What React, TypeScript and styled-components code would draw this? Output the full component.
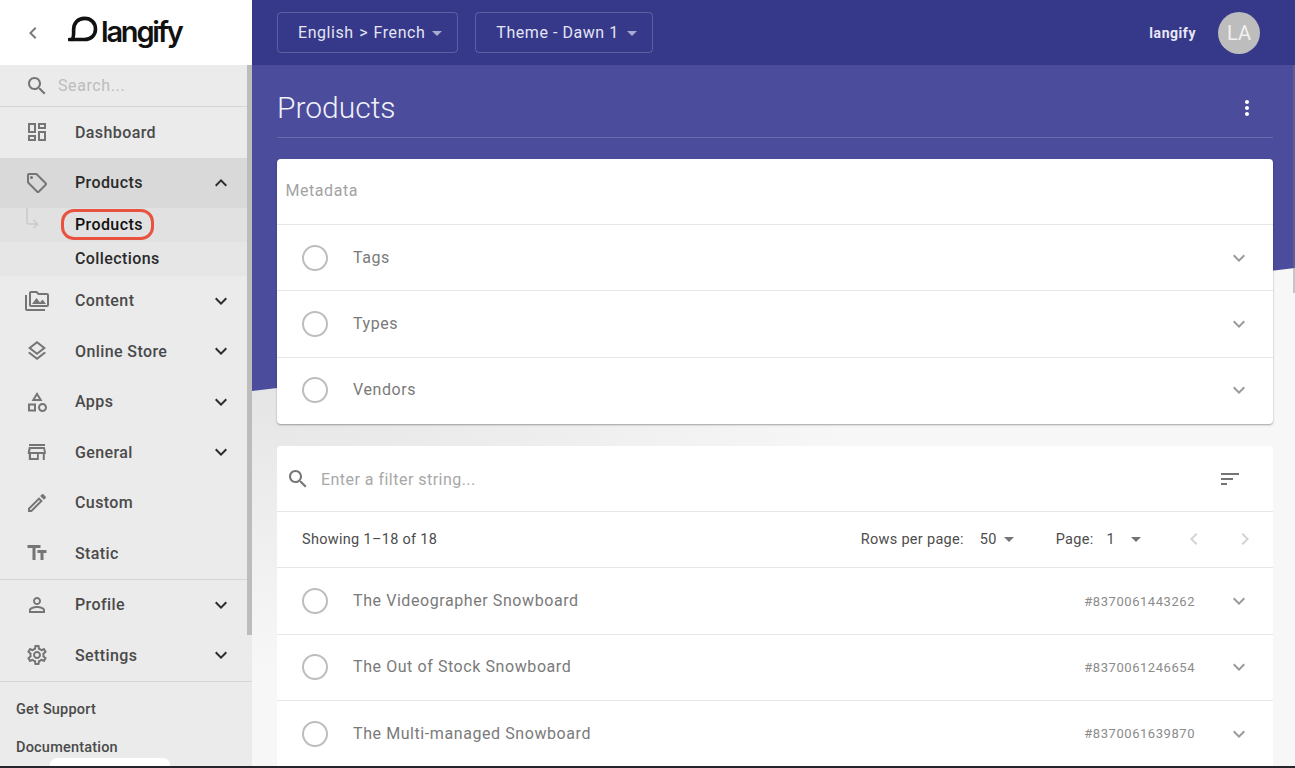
import React from "react";
import styled, { createGlobalStyle } from "styled-components";

const Global = createGlobalStyle`
  html, body { margin: 0; padding: 0; height: 100%; overflow: hidden; background: #f6f6f6; }
  * { box-sizing: border-box; }
  body { font-family: Roboto, "Liberation Sans", sans-serif; }
`;

const P = {
  dashboard: "M19 5v2h-4V5h4M9 5v6H5V5h4m10 8v6h-4v-6h4M9 17v2H5v-2h4M21 3h-8v6h8V3zM11 3H3v10h8V3zm10 8h-8v10h8V11zm-10 4H3v6h8v-6z",
  tag: "m21.41 11.58-9-9C12.05 2.22 11.55 2 11 2H4c-1.1 0-2 .9-2 2v7c0 .55.22 1.05.59 1.42l9 9c.36.36.86.58 1.41.58s1.05-.22 1.41-.59l7-7c.37-.36.59-.86.59-1.41s-.23-1.06-.59-1.42zM13 20.01 4 11V4h7v-.01l9 9-7 7.02zM6.5 5A1.5 1.5 0 1 0 6.5 8 1.5 1.5 0 1 0 6.5 5z",
  media: "M2 6H0v5h.01L0 20c0 1.1.9 2 2 2h18v-2H2V6zm5 9h14l-3.5-4.5-2.5 3.01L11.5 9zM22 4h-8l-2-2H6c-1.1 0-1.99.9-1.99 2L4 16c0 1.1.9 2 2 2h16c1.1 0 2-.9 2-2V6c0-1.1-.9-2-2-2zm0 12H6V4h5.17l1.41 1.41.59.59H22v10z",
  layers: "M11.99 18.54l-7.37-5.73L3 14.07l9 7 9-7-1.63-1.27zM12 16l7.36-5.73L21 9l-9-7-9 7 1.63 1.27L12 16zm0-11.47L17.74 9 12 13.47 6.26 9 12 4.53z",
  category: "m12 2-5.5 9h11L12 2zm0 3.84L13.93 9h-3.87L12 5.84zM17.5 13c-2.49 0-4.5 2.01-4.5 4.5s2.01 4.5 4.5 4.5 4.5-2.01 4.5-4.5-2.01-4.5-4.5-4.5zm0 7c-1.38 0-2.5-1.12-2.5-2.5s1.12-2.5 2.5-2.5 2.5 1.12 2.5 2.5-1.12 2.5-2.5 2.5zM3 21.5h8v-8H3v8zm2-6h4v4H5v-4z",
  store: "M18.36 9l.6 3H5.04l.6-3h12.72M20 4H4v2h16V4zm.2 3H3.8L2.8 12v2h1v6h10v-6h4v6h2v-6h1v-2l-1-5zM6 18v-4h6v4H6z",
  edit: "M3 17.25V21h3.75L17.81 9.94l-3.75-3.75L3 17.25zM5.92 19H5v-.92l9.06-9.06.92.92L5.92 19zM20.71 5.63l-2.34-2.34c-.2-.2-.45-.29-.71-.29s-.51.1-.7.29l-1.83 1.83 3.75 3.75 1.83-1.83c.39-.39.39-1.02 0-1.41z",
  text: "M2.5 4v3h5v12h3V7h5V4h-13zm19 5h-9v3h3v7h3v-7h3V9z",
  person: "M12 5.9c1.16 0 2.1.94 2.1 2.1s-.94 2.1-2.1 2.1S9.9 9.16 9.9 8s.94-2.1 2.1-2.1m0 9c2.97 0 6.1 1.46 6.1 2.1v1.1H5.9V17c0-.64 3.13-2.1 6.1-2.1M12 4C9.79 4 8 5.79 8 8s1.79 4 4 4 4-1.79 4-4-1.79-4-4-4zm0 9c-2.67 0-8 1.34-8 4v3h16v-3c0-2.66-5.33-4-8-4z",
  settings: "M19.43 12.98c.04-.32.07-.64.07-.98 0-.34-.03-.66-.07-.98l2.11-1.65c.19-.15.24-.42.12-.64l-2-3.46c-.09-.16-.26-.25-.44-.25-.06 0-.12.01-.17.03l-2.49 1c-.52-.4-1.08-.73-1.69-.98l-.38-2.65C14.46 2.18 14.25 2 14 2h-4c-.25 0-.46.18-.49.42l-.38 2.65c-.61.25-1.17.59-1.69.98l-2.49-1c-.06-.02-.12-.03-.18-.03-.17 0-.34.09-.43.25l-2 3.46c-.13.22-.07.49.12.64l2.11 1.65c-.04.32-.07.65-.07.98 0 .33.03.66.07.98l-2.11 1.65c-.19.15-.24.42-.12.64l2 3.46c.09.16.26.25.44.25.06 0 .12-.01.17-.03l2.49-1c.52.4 1.08.73 1.69.98l.38 2.65c.03.24.24.42.49.42h4c.25 0 .46-.18.49-.42l.38-2.65c.61-.25 1.17-.59 1.69-.98l2.49 1c.06.02.12.03.18.03.17 0 .34-.09.43-.25l2-3.46c.12-.22.07-.49-.12-.64l-2.11-1.65zm-1.98-1.71c.04.31.05.52.05.73 0 .21-.02.43-.05.73l-.14 1.13.89.7 1.08.84-.7 1.21-1.27-.51-1.04-.42-.9.68c-.43.32-.84.56-1.25.73l-1.06.43-.16 1.13-.2 1.35h-1.4l-.19-1.35-.16-1.13-1.06-.43c-.43-.18-.83-.41-1.23-.71l-.91-.7-1.06.43-1.27.51-.7-1.21 1.08-.84.89-.7-.14-1.13c-.03-.31-.05-.54-.05-.74s.02-.43.05-.73l.14-1.13-.89-.7-1.08-.84.7-1.21 1.27.51 1.04.42.9-.68c.43-.32.84-.56 1.25-.73l1.06-.43.16-1.13.2-1.35h1.39l.19 1.35.16 1.13 1.06.43c.43.18.83.41 1.23.71l.91.7 1.06-.43 1.27-.51.7 1.21-1.07.85-.89.7.14 1.13zM12 8c-2.21 0-4 1.79-4 4s1.79 4 4 4 4-1.79 4-4-1.79-4-4-4zm0 6c-1.1 0-2-.9-2-2s.9-2 2-2 2 .9 2 2-.9 2-2 2z",
  search: "M15.5 14h-.79l-.28-.27C15.41 12.59 16 11.11 16 9.5 16 5.91 13.09 3 9.5 3S3 5.91 3 9.5 5.91 16 9.5 16c1.61 0 3.09-.59 4.23-1.57l.27.28v.79l5 4.99L20.49 19l-4.99-5zm-6 0C7.01 14 5 11.99 5 9.5S7.01 5 9.5 5 14 7.01 14 9.5 11.99 14 9.5 14z",
  more: "M16.59 8.59 12 13.17 7.41 8.59 6 10l6 6 6-6z",
  less: "m12 8-6 6 1.41 1.41L12 10.83l4.59 4.58L18 14z",
  sort: "M3 18h6v-2H3v2zM3 6v2h18V6H3zm0 7h12v-2H3v2z",
  left: "M15.41 7.41 14 6l-6 6 6 6 1.41-1.41L10.83 12z",
  right: "M10 6 8.59 7.41 13.17 12l-4.58 4.59L10 18l6-6z",
  vert: "M12 8c1.1 0 2-.9 2-2s-.9-2-2-2-2 .9-2 2 .9 2 2 2zm0 2c-1.1 0-2 .9-2 2s.9 2 2 2 2-.9 2-2-.9-2-2-2zm0 6c-1.1 0-2 .9-2 2s.9 2 2 2 2-.9 2-2-.9-2-2-2z",
  drop: "m7 10 5 5 5-5z",
};

const Svg = styled.svg<{ $c: string }>`
  display: block;
  flex: none;
  fill: ${(p) => p.$c};
`;

const Icon = ({ d, size = 24, color = "#757575" }: { d: string; size?: number; color?: string }) => (
  <Svg $c={color} width={size} height={size} viewBox="0 0 24 24">
    <path d={d} />
  </Svg>
);

const Shell = styled.div`
  width: 1295px;
  height: 768px;
  display: flex;
  flex-direction: column;
  overflow: hidden;
  position: relative;
`;
const Frame = styled.div`
  flex: 1;
  min-height: 0;
  display: flex;
`;
const BottomEdge = styled.div`
  height: 2px;
  flex: none;
  background: #24262b;
`;
const BottomTab = styled.div`
  position: absolute;
  left: 50px;
  bottom: 2px;
  width: 120px;
  height: 8px;
  background: #fff;
  border-radius: 7px 7px 0 0;
`;

/* Sidebar */
const Sidebar = styled.aside`
  width: 252px;
  flex: none;
  display: flex;
  flex-direction: column;
  background: #ebebeb;
  position: relative;
  overflow: hidden;
`;
const ScrollThumb = styled.div`
  position: absolute;
  top: 65px;
  right: 0;
  width: 5px;
  height: 570px;
  background: #bcbcbc;
`;
const Brand = styled.div`
  height: 65px;
  flex: none;
  background: #fff;
  display: flex;
  align-items: center;
  padding-left: 21px;
`;
const Logo = styled.div`
  display: flex;
  align-items: center;
  margin-left: 23px;
  margin-top: -2px;
`;
const LogoSvg = styled.svg`
  display: block;
  flex: none;
  margin-bottom: 4px;
`;
const LogoText = styled.span`
  font-family: Inter, "Liberation Sans", sans-serif;
  font-weight: 600;
  font-size: 29px;
  letter-spacing: -2.2px;
  color: #111;
  margin-left: 1px;
  margin-top: 1px;
  line-height: 34px;
`;
const SearchBar = styled.div`
  height: 42px;
  flex: none;
  display: flex;
  align-items: center;
  gap: 9px;
  padding-left: 25px;
  border-bottom: 1px solid #d6d6d6;
  color: #bcbcbc;
  font-size: 16px;
  letter-spacing: 0.6px;
`;
const NavItem = styled.div<{ $active?: boolean }>`
  height: 50.5px;
  flex: none;
  display: flex;
  align-items: center;
  padding: 0 19px 0 25px;
  background: ${(p) => (p.$active ? "#d9d9d9" : "transparent")};
`;
const NavLabel = styled.span<{ $active?: boolean }>`
  flex: 1;
  margin-left: 26px;
  font-size: 16px;
  font-weight: 500;
  letter-spacing: 0.4px;
  color: ${(p) => (p.$active ? "#2a2a2a" : "#4a4a4a")};
`;
const SubItem = styled.div<{ $bg: string }>`
  height: 33.8px;
  flex: none;
  display: flex;
  align-items: center;
  padding: 0 0 1px 75px;
  position: relative;
  background: ${(p) => p.$bg};
  font-size: 16px;
  font-weight: 500;
  letter-spacing: 0.4px;
  color: #2b2b2b;
`;
const SubArrow = styled.svg`
  position: absolute;
  left: 24px;
  top: -1px;
  fill: none;
  stroke: #cbcbcb;
  stroke-width: 1.6;
`;
const Highlight = styled.span`
  position: relative;
  color: #111;
  &::after {
    content: "";
    position: absolute;
    left: -14px;
    right: -11px;
    top: -6px;
    bottom: -6px;
    border: 3px solid #e8533f;
    border-radius: 13px;
  }
`;
const NavDivider = styled.div`
  height: 1px;
  flex: none;
  background: #d6d6d6;
`;
const FootLinks = styled.div`
  display: flex;
  flex-direction: column;
  gap: 19px;
  padding: 18.5px 0 0 16px;
  font-size: 14.5px;
  font-weight: 500;
  letter-spacing: 0.2px;
  line-height: 19px;
  color: #4a4a4a;
`;

/* Main */
const Main = styled.main`
  flex: 1;
  min-width: 0;
  position: relative;
  display: flex;
  flex-direction: column;
  overflow: hidden;
  background: radial-gradient(ellipse 620px 330px at 0px 340px, #e2e2e2 0%, #eeeeee 55%, #f7f7f7 100%);
`;
const Hero = styled.div`
  position: absolute;
  top: 65px;
  left: 0;
  right: 0;
  height: 326px;
  background: #4b4c9b;
  clip-path: polygon(0 0, 100% 0, 100% 203px, 0 100%);
`;
const MainThumb = styled.div`
  position: absolute;
  top: 65px;
  right: 0;
  width: 2px;
  height: 228px;
  background: rgba(120, 120, 135, 0.4);
`;
const TopBar = styled.header`
  height: 65px;
  flex: none;
  background: #363889;
  display: flex;
  align-items: center;
  padding: 0 35px 0 25px;
  position: relative;
`;
const Selector = styled.div<{ $caretGap: number }>`
  height: 41px;
  display: flex;
  align-items: center;
  gap: ${(p) => p.$caretGap}px;
  padding: 0 8px 0 20px;
  margin-right: 17px;
  border: 1px solid rgba(255, 255, 255, 0.2);
  border-radius: 4px;
  color: #e4e5f4;
  font-size: 16px;
  letter-spacing: 0.55px;
  white-space: pre;
`;
const Sep = styled.span`
  margin: 0 1px;
`;
const Spacer = styled.div`
  flex: 1;
`;
const UserName = styled.span`
  color: #e8e8f6;
  font-size: 14px;
  font-weight: 700;
  letter-spacing: 0.55px;
  margin-right: 22px;
`;
const Avatar = styled.div`
  width: 42px;
  height: 42px;
  border-radius: 50%;
  background: #bdbdbd;
  color: #f1f1f1;
  display: flex;
  align-items: center;
  justify-content: center;
  font-size: 20px;
`;
const Body = styled.div`
  position: relative;
  flex: 1;
  min-height: 0;
  padding: 0 22px 0 25px;
`;
const TitleRow = styled.div`
  height: 73px;
  display: flex;
  align-items: center;
  justify-content: space-between;
  padding: 13px 14px 0 0;
  border-bottom: 1px solid rgba(255, 255, 255, 0.17);
  margin-bottom: 21px;
`;
const Title = styled.h1`
  margin: 0;
  font-size: 30px;
  font-weight: 300;
  color: #f1f1fa;
`;
const Card = styled.section`
  background: #fff;
  border-radius: 4px;
  box-shadow: 0 1px 2px rgba(0, 0, 0, 0.35);
  margin-bottom: 22px;
  padding-bottom: 1.1px;
`;
const PlainCard = styled(Card)`
  box-shadow: none;
  border-radius: 4px 4px 0 0;
  padding-bottom: 0;
`;
const CardHead = styled.div`
  height: 65px;
  display: flex;
  align-items: center;
  padding: 0 0 2px 8.5px;
  font-size: 16px;
  color: #a3a3a3;
  letter-spacing: 0.55px;
`;
const Row = styled.div`
  height: 66.3px;
  display: flex;
  align-items: center;
  padding: 0 22px 0 25px;
  border-top: 1px solid #e6e6e6;
`;
const Radio = styled.span`
  width: 26px;
  height: 26px;
  flex: none;
  border-radius: 50%;
  border: 2px solid #bdbdbd;
`;
const RowLabel = styled.span`
  flex: 1;
  margin-left: 25px;
  margin-top: -1px;
  font-size: 16px;
  color: #7a7a7a;
  letter-spacing: 0.58px;
`;
const RowId = styled.span`
  font-size: 13px;
  color: #8b8b8b;
  letter-spacing: 0.55px;
  margin-right: 32px;
`;
const FilterRow = styled.div`
  height: 65.2px;
  display: flex;
  align-items: center;
  padding: 1px 31px 0 9px;
`;
const FilterText = styled.span`
  flex: 1;
  margin-left: 11px;
  font-size: 16px;
  color: #a8a8a8;
  letter-spacing: 0.47px;
`;
const PagerRow = styled.div`
  height: 56.2px;
  display: flex;
  align-items: center;
  padding: 0 16px 1px 25px;
  border-top: 1px solid #e6e6e6;
  font-size: 14.5px;
  color: #4c4c4c;
  letter-spacing: 0.3px;
`;
const PagerGap = styled.span<{ $w: number }>`
  flex: none;
  width: ${(p) => p.$w}px;
`;

const MainRow = ({ label, id }: { label: string; id?: string }) => (
  <Row>
    <Radio />
    <RowLabel>{label}</RowLabel>
    {id && <RowId>#{id}</RowId>}
    <Icon d={P.more} color="#9a9a9a" />
  </Row>
);

const LogoMark = () => (
  <LogoSvg width="32" height="30" viewBox="0 0 32 30" fill="none">
    <path
      d="M4 24.5C6 22.5 5.6 20 5.6 15C5.6 8 10 3.4 16.5 3.4C23 3.4 27.5 7.8 27.5 14C27.5 20.2 23 24.5 16.5 24.5H1.5"
      stroke="#111"
      strokeWidth="3.6"
      strokeLinecap="round"
    />
  </LogoSvg>
);

const Nav = ({ d, label, chevron = true, active }: { d: string; label: string; chevron?: boolean; active?: boolean }) => (
  <NavItem $active={active}>
    <Icon d={d} />
    <NavLabel $active={active}>{label}</NavLabel>
    {chevron && <Icon d={active ? P.less : P.more} color="#2c2c2c" />}
  </NavItem>
);

export default function App() {
  return (
    <Shell>
      <Global />
      <Frame>
        <Sidebar>
          <Brand>
            <Icon d={P.left} color="#7a7a7a" />
            <Logo>
              <LogoMark />
              <LogoText>langify</LogoText>
            </Logo>
          </Brand>
          <SearchBar>
            <Icon d={P.search} />
            Search...
          </SearchBar>
          <Nav d={P.dashboard} label="Dashboard" chevron={false} />
          <Nav d={P.tag} label="Products" active />
          <SubItem $bg="#e1e1e1">
            <SubArrow width="16" height="24" viewBox="0 0 16 24">
              <path d="M3 1V15a2 2 0 0 0 2 2H13.5M9.5 13l4 4-4 4" />
            </SubArrow>
            <Highlight>Products</Highlight>
          </SubItem>
          <SubItem $bg="#e6e6e6">Collections</SubItem>
          <Nav d={P.media} label="Content" />
          <Nav d={P.layers} label="Online Store" />
          <Nav d={P.category} label="Apps" />
          <Nav d={P.store} label="General" />
          <Nav d={P.edit} label="Custom" chevron={false} />
          <Nav d={P.text} label="Static" chevron={false} />
          <NavDivider />
          <Nav d={P.person} label="Profile" />
          <Nav d={P.settings} label="Settings" />
          <NavDivider />
          <FootLinks>
            <span>Get Support</span>
            <span>Documentation</span>
          </FootLinks>
          <ScrollThumb />
        </Sidebar>
        <Main>
          <Hero />
          <MainThumb />
          <TopBar>
            <Selector $caretGap={0}>
              English<Sep> {">"} </Sep>French
              <Icon d={P.drop} color="#a9aad0" />
            </Selector>
            <Selector $caretGap={1}>
              Theme - Dawn 1
              <Icon d={P.drop} color="#a9aad0" />
            </Selector>
            <Spacer />
            <UserName>langify</UserName>
            <Avatar>LA</Avatar>
          </TopBar>
          <Body>
            <TitleRow>
              <Title>Products</Title>
              <Icon d={P.vert} color="#fff" />
            </TitleRow>
            <Card>
              <CardHead>Metadata</CardHead>
              <MainRow label="Tags" />
              <MainRow label="Types" />
              <MainRow label="Vendors" />
            </Card>
            <PlainCard>
              <FilterRow>
                <Icon d={P.search} />
                <FilterText>Enter a filter string...</FilterText>
                <Icon d={P.sort} />
              </FilterRow>
              <PagerRow>
                <span>Showing 1–18 of 18</span>
                <Spacer />
                <span>Rows per page:</span>
                <PagerGap $w={16} />
                <span>50</span>
                <Icon d={P.drop} />
                <PagerGap $w={35} />
                <span>Page:</span>
                <PagerGap $w={13} />
                <span>1</span>
                <PagerGap $w={9} />
                <Icon d={P.drop} />
                <PagerGap $w={34} />
                <Icon d={P.left} color="#d4d4d4" />
                <PagerGap $w={27} />
                <Icon d={P.right} color="#d4d4d4" />
              </PagerRow>
              <MainRow label="The Videographer Snowboard" id="8370061443262" />
              <MainRow label="The Out of Stock Snowboard" id="8370061246654" />
              <MainRow label="The Multi-managed Snowboard" id="8370061639870" />
            </PlainCard>
          </Body>
        </Main>
      </Frame>
      <BottomEdge />
      <BottomTab />
    </Shell>
  );
}
